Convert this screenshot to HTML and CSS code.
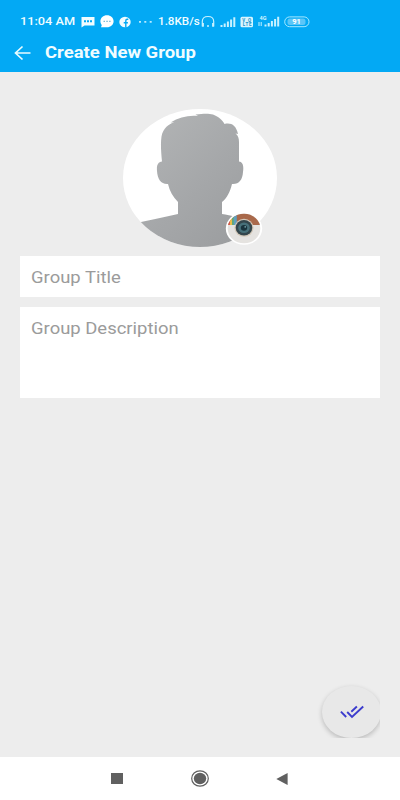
FILE: index.html
```html
<!DOCTYPE html>
<html lang="en">
<head>
<meta charset="UTF-8">
<meta name="viewport" content="width=device-width, initial-scale=1.0">
<title>Create New Group</title>
<link rel="stylesheet" href="styles.css">
</head>
<body>

<div class="screen">
    <header class="header">
        <div class="status">
            <div class="time"><span class="wide">11:04 AM</span></div>
            <svg class="sms" width="14" height="12" viewBox="0 0 14 12">
                <path fill="#f0fcff" d="M.5 1h13v8.500h-10L.5 11.500z"/>
                <path fill="#03a9f4" d="M3 4.300h2v2H3zM6 4.300h2v2H6zM9 4.300h2v2H9z"/>
            </svg>
            <svg class="chat" width="14" height="13" viewBox="0 0 14 13">
                <path fill="#fff" d="M7 .3c3.700 0 6.600 2.600 6.600 6s-2.900 6-6.600 6H1l.8-2.300C.9 9 .4 7.700.4 6.300c0-3.400 2.900-6 6.600-6z"/>
                <path fill="#7dbbd6" d="M3.500 5.700H5v1.200H3.500zM6.300 5.700h1.500v1.200H6.300zM9.100 5.700h1.500v1.200H9.100z"/>
            </svg>
            <svg class="fb" width="12" height="12" viewBox="0 0 12 12">
                <ellipse cx="6" cy="6" rx="5.700" ry="5.300" fill="#f0fcff"/>
                <path fill="none" stroke="#03a9f4" stroke-width="1.400" d="M9.300 3.300H8.200Q6.800 3.300 6.800 4.800V11.500M4.700 6.700h4.200"/>
            </svg>
            <svg class="dots" width="15" height="4" viewBox="0 0 15 4">
                <path fill="#b8eaff" d="M1 1h2v1.700H1zM6.300 1h2v1.700h-2zM11.700 1h2v1.700h-2z"/>
            </svg>
            <div class="speed"><span class="wide">1.8KB/s</span></div>
            <svg class="headset" width="14" height="13" viewBox="0 0 14 13">
                <path fill="none" stroke="#c8f1ff" stroke-width="1.200" d="M2.700 11H1.300V6.500C1.300 3 3.700 1.500 7 1.500s5.700 1.500 5.700 5V11h-1.500"/>
                <path fill="#c8f1ff" d="M1 8h1.900v3.500H1zM11.100 8H13v3.500h-1.900zM6 10.300h2v1.500H6z"/>
            </svg>
            <svg class="signal" width="16" height="12" viewBox="0 0 16 12">
                <path fill="#c8f1ff" d="M.5 9h2v2h-2zM3.700 7.500h2V11h-2zM6.900 5.500h2V11h-2zM10.100 3.500h2V11h-2zM13.300 1.300h2V11h-2z"/>
            </svg>
            <svg class="volte" width="14" height="12" viewBox="0 0 14 12">
                <rect x=".5" y=".8" width="12.500" height="10.400" rx="1.500" fill="#d8f5ff"/>
                <text x="2.200" y="5.500" textLength="9">VO</text>
                <text x="2.700" y="10.200" textLength="8.800">LTE</text>
            </svg>
            <svg class="lte" width="22" height="13" viewBox="0 0 22 13">
                <text x="1.500" y="5">4G</text>
                <path fill="#c8f1ff" d="M.5 7h1v4h-1zM2.700 7h1v4h-1zM6.500 9.500h2v2h-2zM9.700 8h2v3.500h-2zM12.900 6h2v5.500h-2zM16.100 4h2v7.500h-2zM19.200 1.800h2v9.700h-2z"/>
            </svg>
            <svg class="battery" width="26" height="12" viewBox="0 0 26 12">
                <rect x=".7" y=".9" width="24.300" height="9.800" rx="4.900" fill="none" stroke="#a6e8ff"/>
                <rect x="3.500" y="2.500" width="18" height="6.600" rx="2.500" fill="#5bc6f8"/>
                <text x="8.300" y="8.400">91</text>
            </svg>
        </div>
        <div class="toolbar">
            <svg class="back" width="17" height="16" viewBox="0 0 17 16">
                <path fill="none" stroke="#e9fcff" stroke-width="1.700" d="M16.500 8H2M8.500 1.500L1.500 8l7 6.500"/>
            </svg>
            <h1><span class="wide">Create New Group</span></h1>
        </div>
    </header>

    <main class="content">
        <div class="avatar">
            <svg width="154" height="138" viewBox="0 0 154 138">
                <defs>
                    <clipPath id="oval"><ellipse cx="77" cy="69" rx="77" ry="69"/></clipPath>
                    <linearGradient id="shade" x1="0" y1="0" x2="1" y2="1">
                        <stop offset="0" stop-color="#b5b7b8"/>
                        <stop offset=".55" stop-color="#a5a7a9"/>
                        <stop offset="1" stop-color="#999b9d"/>
                    </linearGradient>
                </defs>
                <g clip-path="url(#oval)">
                    <rect width="154" height="138" fill="#fff"/>
                    <path fill="url(#shade)" d="M39 52.500C38 42 37.500 34 38.500 27.500C40 19 46 15 51.500 13L47.500 13.500C56 8.500 65 6 75 7L72.500 5.500C81 4.500 86 4.500 90 5.500C96 8 99.500 11 101.500 15C108 13.500 113 16 115 25L112.500 24.500C115 26.500 116 29 116 33V52.500C119.500 53 121 56 120 63C119.500 71 116 75.500 109 75C107 83 104 89 99 93V105C108 106.500 119 109 135 114V138H0V118L18 113C31 110 43 108 55 105V93C50 88 46.500 82 45 75C38 75.500 34.500 70 34 62C33.500 56 35 53 39 52.500Z"/>
                </g>
            </svg>
            <svg class="camera" width="38" height="34" viewBox="0 0 38 34">
                <defs><clipPath id="lens"><ellipse cx="19" cy="16.500" rx="16.300" ry="14.700"/></clipPath></defs>
                <ellipse cx="19" cy="16.500" rx="18.200" ry="16.300" fill="#fff"/>
                <g clip-path="url(#lens)">
                    <rect width="38" height="34" fill="#e5e3e0"/>
                    <rect width="38" height="13" fill="#a9694b"/>
                    <path fill="#d75a48" d="M0 0h5v13H0z"/>
                    <path fill="#eabd48" d="M5 0h2v13H5z"/>
                    <path fill="#61a879" d="M7 0h2v13H7z"/>
                    <path fill="#5fa0c0" d="M8.800 0h3v13h-3z"/>
                </g>
                <ellipse cx="19" cy="15.800" rx="9.600" ry="9" fill="#d3c8b9"/>
                <ellipse cx="19" cy="15.800" rx="8.300" ry="7.700" fill="#34464c"/>
                <ellipse cx="19" cy="15.800" rx="5.800" ry="5.200" fill="#477079"/>
                <ellipse cx="19" cy="15.800" rx="3.200" ry="2.900" fill="#19333c"/>
                <circle cx="20.200" cy="14.900" r=".8" fill="#79a6ad"/>
            </svg>
        </div>
        <div class="field"><span class="wide">Group Title</span></div>
        <div class="field description"><span class="wide">Group Description</span></div>
        <div class="fab">
            <div class="fab-button">
                <svg width="24" height="14" viewBox="0 0 24 14">
                    <path fill="none" stroke="#3c3ccd" stroke-width="1.900" d="M.9 6.700L6.200 12M7.200 7L12 12L23.200 1.500M11.300 6.700L16.900 1.500"/>
                </svg>
            </div>
        </div>
    </main>

    <nav class="navbar">
        <svg width="12" height="11" viewBox="0 0 12 11"><rect width="12" height="11" fill="#606060"/></svg>
        <svg width="18" height="17" viewBox="0 0 18 17">
            <ellipse cx="9" cy="8.500" rx="8.300" ry="7.700" fill="none" stroke="#606060" stroke-width="1.200"/>
            <ellipse cx="9" cy="8.500" rx="6.200" ry="5.700" fill="#606060"/>
        </svg>
        <svg width="12" height="12" viewBox="0 0 12 12"><path fill="#606060" d="M.3 6L11.600 0v12z"/></svg>
    </nav>
</div>

</body>
</html>
```

FILE: styles.css
```css
* {
    box-sizing: border-box;
}
body {
    margin: 0;
    font-family: Roboto, sans-serif;
}
svg {
    display: block;
    flex: none;
}
.screen {
    display: flex;
    flex-direction: column;
    width: 400px;
    height: 800px;
    background-color: #ededed;
}
.wide {
    display: inline-block;
    white-space: nowrap;
    transform: scaleX(1.085);
    transform-origin: left;
}
.header {
    height: 72px;
    background-color: #03a9f4;
    color: #f0fcff;
}
.status {
    display: flex;
    align-items: center;
    height: 33px;
    padding: 10px 0 0 20px;
    font-size: 11px;
    line-height: 12px;
    font-weight: 500;
}
.time {
    width: 55px;
}
.time .wide {
    transform: scaleX(1.16);
}
.sms {
    margin-left: 6px;
}
.chat {
    margin-left: 5px;
}
.fb {
    margin-left: 5px;
}
.dots {
    margin-left: 7px;
}
.speed {
    width: 42px;
    margin-left: 5px;
}
.speed .wide {
    transform: scaleX(1.06);
}
.headset {
    margin-left: 1px;
}
.signal {
    margin-left: 5px;
}
.volte {
    margin-left: 4px;
}
.volte text {
    font-size: 4.5px;
    font-weight: 700;
    fill: #168fc7;
}
.lte {
    margin-left: 4px;
}
.lte text {
    font-size: 5.5px;
    font-weight: 700;
    fill: #d8f5ff;
}
.battery {
    margin-left: 4px;
}
.battery text {
    font-size: 7.5px;
    font-weight: 700;
    fill: #fff;
}
.toolbar {
    display: flex;
    align-items: center;
    height: 39px;
    padding-left: 14px;
}
.toolbar h1 {
    margin: 1px 0 0 14px;
    font-size: 16.5px;
    line-height: 20px;
    font-weight: 700;
}
.toolbar .wide {
    transform: scaleX(1.12);
}
.content {
    display: flex;
    flex: 1;
    flex-direction: column;
    padding: 37px 20px 19px;
}
.avatar {
    position: relative;
    align-self: center;
    margin-bottom: 9px;
}
.camera {
    position: absolute;
    right: 14px;
    bottom: 1px;
}
.field {
    height: 41px;
    padding: 11px 11px 0;
    background-color: #fff;
    color: #9b9b9b;
    font-size: 17px;
    line-height: 21px;
}
.description {
    height: 91px;
    margin-top: 10px;
}
.fab {
    align-self: flex-end;
    width: 66px;
    height: 58px;
    margin-top: auto;
    padding: 6px 0 0 8px;
    overflow: hidden;
}
.fab-button {
    display: flex;
    align-items: center;
    justify-content: center;
    width: 59px;
    height: 52px;
    border-radius: 50%;
    background-color: #e8e8e8;
    box-shadow: 0 2px 5px rgba(0, 0, 0, 0.22);
}
.navbar {
    display: flex;
    align-items: center;
    justify-content: space-between;
    height: 43px;
    padding: 0 112px 0 111px;
    background-color: #fff;
}
```
